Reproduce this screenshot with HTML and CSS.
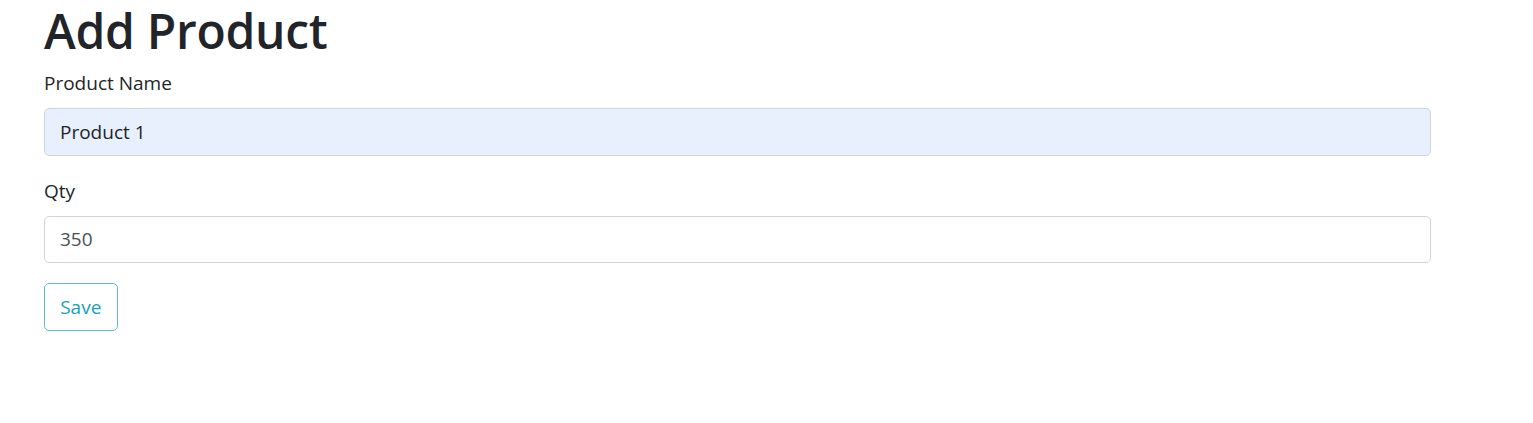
FILE: index.html
```html
<!DOCTYPE html>
<html lang="en">
<head>
<meta charset="utf-8">
<title>Add Product</title>
<link rel="stylesheet" href="styles.css">
</head>
<body>
<main class="page">
  <h1 class="title">Add Product</h1>
  <form class="form">
    <div class="form-group">
      <label class="label" for="name">Product Name</label>
      <input class="input input-autofill" id="name" type="text" value="Product 1">
    </div>
    <div class="form-group">
      <label class="label" for="qty">Qty</label>
      <input class="input" id="qty" type="text" value="350">
    </div>
    <button class="btn-save" type="button">Save</button>
  </form>
</main>
</body>
</html>
```

FILE: styles.css
```css
* { box-sizing: border-box; }
html, body { margin: 0; padding: 0; background: #fff; }
body {
  font-family: "Open Sans", "Noto Sans", sans-serif;
  color: #212529;
}
.page {
  padding: 0 102px 0 44px;
}
.title {
  margin: 0 0 6px 0;
  font-size: 48px;
  line-height: 62px;
  font-weight: 600;
  color: #212529;
  letter-spacing: -0.3px;
}
.form { display: flex; flex-direction: column; }
.form-group { margin-bottom: 20px; display: flex; flex-direction: column; }
.label {
  font-size: 19px;
  line-height: 30px;
  margin-bottom: 10px;
  color: #212529;
}
.input {
  width: 100%;
  height: 47.5px;
  padding: 0 15px;
  font-family: inherit;
  font-size: 19px;
  color: #495057;
  background: #fff;
  border: 1px solid #ced4da;
  border-radius: 5px;
  outline: none;
}
.input-autofill {
  background: #e8f0fe;
  color: #212529;
}
.btn-save {
  align-self: flex-start;
  width: 73.5px;
  height: 47.5px;
  padding: 0;
  font-family: inherit;
  font-size: 19px;
  color: #17a2b8;
  background: #fff;
  border: 1.5px solid #5fbccb;
  border-radius: 5px;
  cursor: pointer;
}
```
